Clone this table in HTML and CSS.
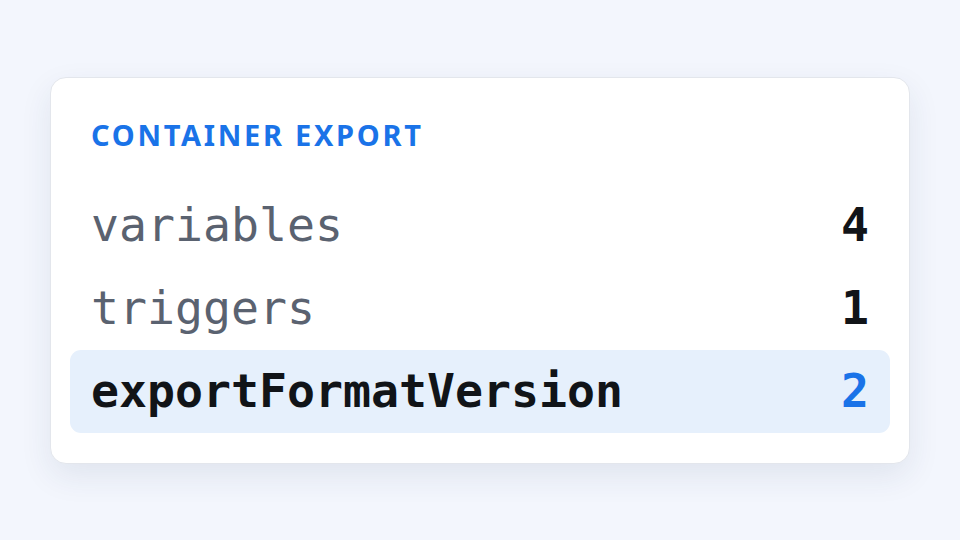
FILE: index.html
```html
<!DOCTYPE html>
<html lang="en">
<head>
<meta charset="utf-8">
<title>Container Export</title>
<link rel="stylesheet" href="styles.css">
</head>
<body>
<main class="card">
  <h2 class="title">CONTAINER EXPORT</h2>
  <ul class="rows">
    <li class="row"><span class="key">variables</span><span class="val">4</span></li>
    <li class="row"><span class="key">triggers</span><span class="val">1</span></li>
    <li class="row row--active"><span class="key">exportFormatVersion</span><span class="val">2</span></li>
  </ul>
</main>
</body>
</html>
```

FILE: styles.css
```css
html, body {
  margin: 0;
  padding: 0;
}
body {
  width: 960px;
  height: 540px;
  background: #f3f6fd;
  display: flex;
  align-items: center;
  justify-content: center;
  font-family: "Noto Sans", "DejaVu Sans", sans-serif;
}
.card {
  box-sizing: border-box;
  width: 860px;
  height: 387px;
  background: #ffffff;
  border: 1px solid #e3e6ec;
  border-radius: 16px;
  box-shadow: 0 12px 32px rgba(30, 50, 90, 0.09);
  padding: 39px 19px 30px;
  display: flex;
  flex-direction: column;
}
.title {
  margin: 0 0 32px 21px;
  font-size: 29px;
  line-height: 35px;
  font-weight: 700;
  letter-spacing: 2.7px;
  color: #1a73e8;
}
.rows {
  list-style: none;
  margin: 0;
  padding: 0;
  display: flex;
  flex-direction: column;
}
.row {
  display: flex;
  justify-content: space-between;
  align-items: baseline;
  height: 83px;
  padding: 0 21px;
  border-radius: 11px;
  font-family: "DejaVu Sans Mono", monospace;
  font-size: 46.5px;
  line-height: 83px;
}
.key {
  color: #5a6270;
}
.val {
  color: #111418;
  font-weight: 700;
}
.row--active {
  background: #e6f0fc;
}
.row--active .key {
  color: #111418;
  font-weight: 700;
}
.row--active .val {
  color: #1a73e8;
}
```
